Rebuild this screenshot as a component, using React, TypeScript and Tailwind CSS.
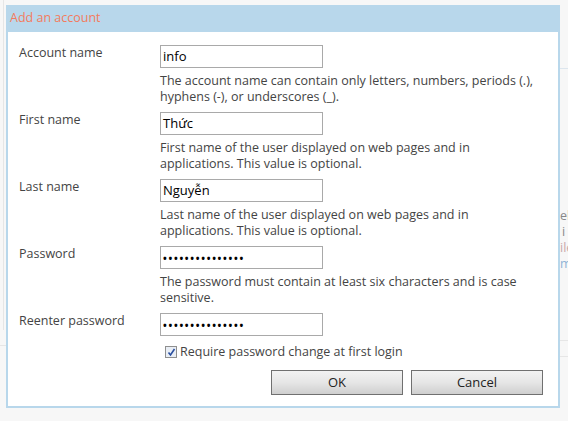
import React from "react";

const font = { fontFamily: '"Open Sans", "Noto Sans", Arial, sans-serif' };

function Field({ value, password }: { value: string; password?: boolean }) {
  return (
    <div className="h-[23px] w-[163px] border border-[#a9a9a9] bg-white flex items-center pl-[2px] text-[13px] text-black leading-none">
      {password ? (
        <span className="text-[10px] tracking-[1.7px] font-bold">•••••••••••••••</span>
      ) : (
        value
      )}
    </div>
  );
}

function Row({
  label,
  value,
  help,
  password,
}: {
  label: string;
  value: string;
  help?: React.ReactNode;
  password?: boolean;
}) {
  return (
    <div className="flex">
      <div className="w-[141px] shrink-0 text-[12.5px] leading-[16px] text-[#444]">{label}</div>
      <div className="flex flex-col">
        <Field value={value} password={password} />
        {help && (
          <div className="mt-[5px] mb-[7px] w-[385px] text-[12.5px] leading-[16px] text-[#444]">{help}</div>
        )}
      </div>
    </div>
  );
}

export default function App() {
  return (
    <div className="w-[568px] h-[421px] bg-[#f7f7f7] overflow-hidden relative" style={font}>
      {/* faint background page lines */}
      <div className="absolute left-[3px] top-0 h-[330px] w-px bg-[#e6e6e6]" />
      <div className="absolute right-0 top-[68px] h-px w-[10px] bg-[#dde6ee]" />
      <div className="absolute right-0 top-[340px] h-px w-[10px] bg-[#e6e6e6]" />
      <div className="absolute right-0 top-[356px] h-px w-[10px] bg-[#e6e6e6]" />
      <div className="absolute left-0 top-[345px] h-px w-[6px] bg-[#e6e6e6]" />
      <div className="absolute left-[560px] top-[208px] text-[12.5px] leading-[16px] whitespace-nowrap">
        <div className="text-[#888]">el</div>
        <div className="text-[#888] pl-[2px]">i</div>
        <div className="text-[#c9a9a9]">ile</div>
        <div className="text-[#8fb3d6]">m</div>
      </div>

      <div className="relative ml-[6px] mt-[5px] w-[554px]">
        <div className="h-[27px] bg-[#b8d7eb] flex items-center pl-[4px] text-[12.5px] text-[#f47b5d]">
          Add an account
        </div>
        <div className="bg-white border-x-2 border-b-2 border-[#b8d7eb] h-[376px] pl-[11px] pt-[13px]">
          <Row
            label="Account name"
            value="info"
            help={<>The account name can contain only letters, numbers, periods (.), hyphens (-), or underscores (_).</>}
          />
          <Row
            label="First name"
            value="Thức"
            help={<>First name of the user displayed on web pages and in applications. This value is optional.</>}
          />
          <Row
            label="Last name"
            value="Nguyễn"
            help={<>Last name of the user displayed on web pages and in applications. This value is optional.</>}
          />
          <Row
            label="Password"
            value=""
            password
            help={<>The password must contain at least six characters and is case sensitive.</>}
          />
          <Row label="Reenter password" value="" password />
          <div className="flex items-center ml-[146px] mt-[8px] text-[12.5px] text-[#444] leading-[16px]">
            <div className="w-[12px] h-[12px] border border-[#8f8f8f] bg-[#e9eef5] flex items-center justify-center mr-[3px]">
              <svg width="9" height="9" viewBox="0 0 9 9">
                <path d="M1.5 4.5 L3.5 7 L7.5 1" stroke="#2a4fa0" strokeWidth="1.6" fill="none" />
              </svg>
            </div>
            Require password change at first login
          </div>
          <div className="flex justify-end gap-[8px] mr-[15px] mt-[10px]">
            <button className="w-[132px] h-[25px] border border-[#707070] bg-gradient-to-b from-[#f2f2f2] via-[#e6e6e6] to-[#cfcfcf] text-[13px] text-[#222]">
              OK
            </button>
            <button className="w-[132px] h-[25px] border border-[#707070] bg-gradient-to-b from-[#f2f2f2] via-[#e6e6e6] to-[#cfcfcf] text-[13px] text-[#222]">
              Cancel
            </button>
          </div>
        </div>
      </div>
    </div>
  );
}
